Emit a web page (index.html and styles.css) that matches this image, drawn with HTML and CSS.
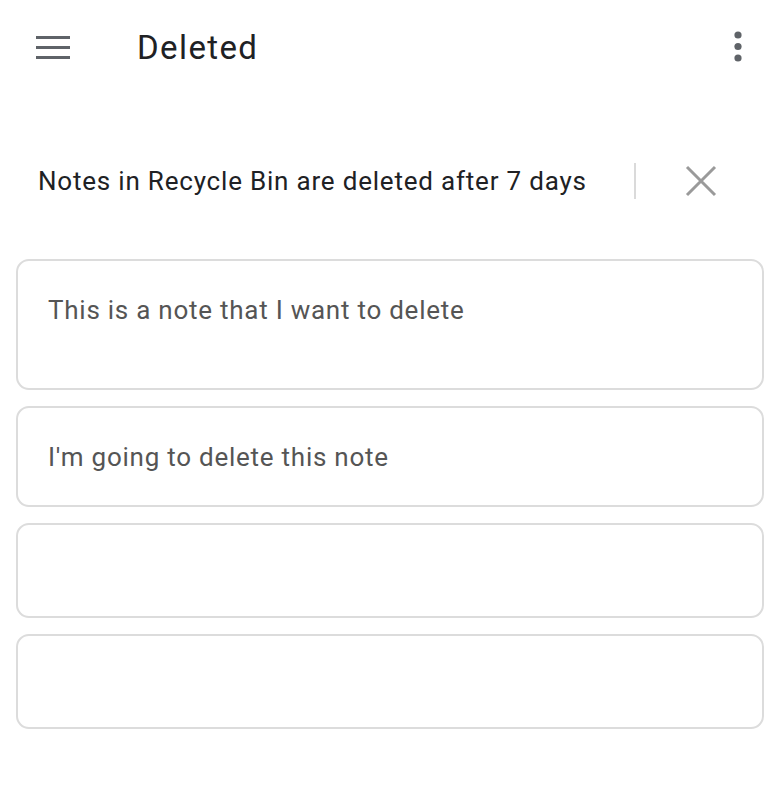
FILE: index.html
```html
<!DOCTYPE html>
<html>
<head>
  <link rel="stylesheet" href="styles.css">
</head>
<body>

  <div class="topbar">
    <svg class="menu-icon" width="34" height="24" viewBox="0 0 34 24">
      <rect x="0" y="1" width="34" height="3" fill="#5f6368"/>
      <rect x="0" y="11" width="34" height="3" fill="#5f6368"/>
      <rect x="0" y="21" width="34" height="3" fill="#5f6368"/>
    </svg>
    <h1 class="title">Deleted</h1>
    <svg class="more-icon" width="8" height="32" viewBox="0 0 8 32">
      <circle cx="4" cy="4" r="3.6" fill="#5f6368"/>
      <circle cx="4" cy="15.5" r="3.6" fill="#5f6368"/>
      <circle cx="4" cy="27" r="3.6" fill="#5f6368"/>
    </svg>
  </div>

  <div class="banner">
    <p class="banner-text">Notes in Recycle Bin are deleted after 7 days</p>
    <span class="divider"></span>
    <svg class="close-icon" width="32" height="32" viewBox="0 0 32 32">
      <path d="M2 2 L30 30 M30 2 L2 30" stroke="#9a9a9a" stroke-width="3" fill="none"/>
    </svg>
  </div>

  <div class="notes">
    <div class="note tall"><p class="note-text">This is a note that I want to delete</p></div>
    <div class="note"><p class="note-text">I'm going to delete this note</p></div>
    <div class="note empty"></div>
    <div class="note empty"></div>
  </div>

</body>
</html>
```

FILE: styles.css
```css
body {
  margin: 0;
  background-color: #ffffff;
  font-family: Roboto, "Liberation Sans", sans-serif;
  color: #202124;
}

.topbar {
  display: flex;
  align-items: center;
  height: 94px;
  padding: 0 38px 0 36px;
}

.menu-icon {
  flex: none;
}

.title {
  margin: 0 0 0 67px;
  flex: 1;
  font-size: 33px;
  font-weight: 400;
  letter-spacing: 1.4px;
  color: #202124;
}

.more-icon {
  flex: none;
}

.banner {
  display: flex;
  align-items: center;
  height: 60px;
  margin-top: 57px;
  padding-left: 38px;
}

.banner-text {
  margin: 0;
  flex: none;
  width: 596px;
  font-size: 26px;
  letter-spacing: 0.8px;
  color: #202124;
}

.divider {
  width: 2px;
  height: 36px;
  background-color: #dadada;
}

.close-icon {
  margin-left: 49px;
}

.notes {
  display: flex;
  flex-direction: column;
  gap: 16px;
  padding: 48px 16px 0 16px;
}

.note {
  height: 96px;
  border: 2px solid #dcdcdc;
  border-radius: 13px;
  padding: 0 30px;
  box-sizing: border-box;
}

.note.tall {
  height: 131px;
}

.note:nth-child(2) {
  height: 101px;
  display: flex;
  align-items: center;
}

.note.empty {
  height: 95px;
}

.note-text {
  margin: 0;
  font-size: 26px;
  line-height: 32px;
  letter-spacing: 0.75px;
  color: #555555;
}

.note.tall .note-text {
  padding-top: 33px;
}
```
